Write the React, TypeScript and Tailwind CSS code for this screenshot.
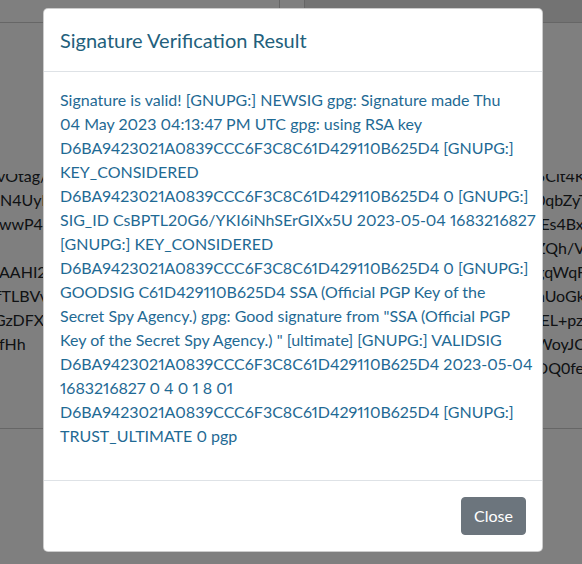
import React from "react";

const bodyLines = [
  "Signature is valid! [GNUPG:] NEWSIG gpg: Signature made Thu",
  "04 May 2023 04:13:47 PM UTC gpg: using RSA key",
  "D6BA9423021A0839CCC6F3C8C61D429110B625D4 [GNUPG:]",
  "KEY_CONSIDERED",
  "D6BA9423021A0839CCC6F3C8C61D429110B625D4 0 [GNUPG:]",
  "SIG_ID CsBPTL20G6/YKI6iNhSErGIXx5U 2023-05-04 1683216827",
  "[GNUPG:] KEY_CONSIDERED",
  "D6BA9423021A0839CCC6F3C8C61D429110B625D4 0 [GNUPG:]",
  "GOODSIG C61D429110B625D4 SSA (Official PGP Key of the",
  "Secret Spy Agency.) gpg: Good signature from \"SSA (Official PGP",
  "Key of the Secret Spy Agency.) \" [ultimate] [GNUPG:] VALIDSIG",
  "D6BA9423021A0839CCC6F3C8C61D429110B625D4 2023-05-04",
  "1683216827 0 4 0 1 8 01",
  "D6BA9423021A0839CCC6F3C8C61D429110B625D4 [GNUPG:]",
  "TRUST_ULTIMATE 0 pgp",
];

const leftBg = [
  { t: "vOtag/", c: "-ml-[3px]" },
  { t: "N4UyK", c: "ml-0" },
  { t: "wwP4q", c: "-ml-[1px]" },
  { t: "", c: "ml-0" },
  { t: "AAHI2C", c: "-ml-[1px]" },
  { t: "fTLBVv", c: "-ml-[4px]" },
  { t: "GzDFXP", c: "-ml-[6px]" },
  { t: "fHh", c: "-ml-[1px]" },
];
const rightBg = ["5Clt4Km", "0qbZyT", "IEs4Bx", "ZQh/Vw", "gqWqFa", "nUoGkd", "IEL+pz", "WoyJCa", "DQ0fe"];

export default function App() {
  return (
    <div className="relative w-[582px] h-[564px] overflow-hidden bg-white" style={{ fontFamily: '"Lato", "Noto Sans", sans-serif' }}>
      {/* background page */}
      <div className="flex flex-col h-full">
        <div className="flex h-[23px] border-b border-[#cccccc]">
          <div className="w-[280px] border-r border-[#cccccc]" />
          <div className="w-[25px] border-r border-[#cccccc]" />
          <div className="flex-1 bg-[#e6e6e6]" />
        </div>
        <div className="h-[406px] border-b border-[#cccccc] flex pt-[151px]">
          <div className="w-[44px] h-[240px] overflow-hidden">
            <div className="-mt-[10px] text-[16px] leading-[24px] text-[#212529] whitespace-nowrap">
              {leftBg.map((l, i) => (
                <div key={i} className={"h-[24px] " + l.c}>{l.t}</div>
              ))}
            </div>
          </div>
          <div className="w-[492px]" />
          <div className="flex-1 h-[240px] overflow-hidden">
            <div className="-mt-[10px] text-[16px] leading-[24px] text-[#212529] whitespace-nowrap">
              {rightBg.map((l, i) => (
                <div key={i} className="h-[24px]">{l}</div>
              ))}
            </div>
          </div>
        </div>
      </div>

      {/* overlay */}
      <div className="absolute inset-0 bg-black/50" />

      {/* modal */}
      <div className="absolute left-[43px] top-[8px] w-[500px] bg-white border border-black/20 rounded-[5px] flex flex-col">
        <div className="px-4 py-4 border-b border-[#dee2e6]">
          <div className="text-[20px] leading-[30px] text-[#235f7c]">Signature Verification Result</div>
        </div>
        <div className="p-4">
          <div className="mb-4 text-[16px] leading-[24px] text-[#1f6a94] whitespace-nowrap proportional-nums">
            {bodyLines.map((l, i) => (
              <div key={i}>{l}</div>
            ))}
          </div>
        </div>
        <div className="flex justify-end p-3 border-t border-[#dee2e6]">
          <button className="m-1 px-3 py-1.5 text-[16px] leading-6 text-white bg-[#6c757d] border border-[#6c757d] rounded-[4px]">
            Close
          </button>
        </div>
      </div>
    </div>
  );
}
